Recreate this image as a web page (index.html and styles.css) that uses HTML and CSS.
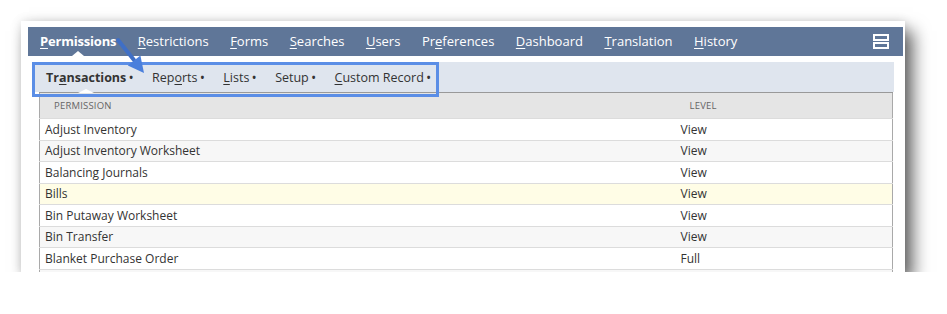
FILE: index.html
```html
<!DOCTYPE html>
<html lang="en">

<head>
    <meta charset="UTF-8">
    <title>Role Permissions</title>
    <link rel="stylesheet" href="styles.css">
</head>

<body>
    <div class="card">
        <nav class="mainTabs">
            <a class="tab active"><u>P</u>ermissions</a>
            <a class="tab"><u>R</u>estrictions</a>
            <a class="tab"><u>F</u>orms</a>
            <a class="tab"><u>S</u>earches</a>
            <a class="tab"><u>U</u>sers</a>
            <a class="tab">Pr<u>e</u>ferences</a>
            <a class="tab"><u>D</u>ashboard</a>
            <a class="tab"><u>T</u>ranslation</a>
            <a class="tab"><u>H</u>istory</a>
            <span class="layoutIcon"><i></i><i></i></span>
        </nav>

        <div class="subTabs">
            <a class="sub active">Tr<u>a</u>nsactions<b>•</b></a>
            <a class="sub">Rep<u>o</u>rts<b>•</b></a>
            <a class="sub"><u>L</u>ists<b>•</b></a>
            <a class="sub">Setup<b>•</b></a>
            <a class="sub"><u>C</u>ustom Record<b>•</b></a>
        </div>

        <table class="permTable">
            <thead>
                <tr>
                    <th class="colName">Permission</th>
                    <th>Level</th>
                </tr>
            </thead>
            <tbody>
                <tr><td>Adjust Inventory</td><td>View</td></tr>
                <tr class="odd"><td>Adjust Inventory Worksheet</td><td>View</td></tr>
                <tr><td>Balancing Journals</td><td>View</td></tr>
                <tr class="hover"><td>Bills</td><td>View</td></tr>
                <tr><td>Bin Putaway Worksheet</td><td>View</td></tr>
                <tr class="odd"><td>Bin Transfer</td><td>View</td></tr>
                <tr><td>Blanket Purchase Order</td><td>Full</td></tr>
                <tr class="odd"><td></td><td></td></tr>
            </tbody>
        </table>

        <!-- annotation: highlight box + arrow -->
        <div class="callout"></div>
        <svg class="arrow" width="60" height="60" viewBox="0 0 60 60">
            <line x1="6" y1="6" x2="22" y2="26" stroke="#3f6fc6" stroke-width="4" stroke-linecap="round" />
            <polygon points="32,39 15.8,31.4 28.4,21.4" fill="#4a7fdc" />
        </svg>
    </div>
</body>

</html>
```

FILE: styles.css
```css
body,
div,
nav,
table,
th,
td {
    padding: 0;
    margin: 0;
    box-sizing: border-box;
}

body {
    background: #fff;
    font-family: "Open Sans", "Liberation Sans", sans-serif;
}

a {
    color: inherit;
    text-decoration: none;
}

u {
    text-underline-offset: 2px;
}

.card {
    position: relative;
    width: 884px;
    height: 251px;
    margin: 21px 0 0 21px;
    padding: 6px 2px 0 7px;
    background: #fff;
    overflow: hidden;
    box-shadow: 8px 10px 16px rgba(0, 0, 0, 0.6), 0 0 10px rgba(0, 0, 0, 0.12);
}

.mainTabs {
    display: flex;
    align-items: center;
    gap: 21.5px;
    height: 29px;
    padding: 0 14px 0 12px;
    background: #5f7698;
}

.mainTabs .tab {
    position: relative;
    color: #fff;
    font-size: 13px;
    line-height: 29px;
}

.mainTabs .active {
    font-weight: bold;
    letter-spacing: -0.2px;
}

.mainTabs .active:after {
    content: '';
    position: absolute;
    left: 50%;
    bottom: 0;
    margin-left: -6px;
    border: 6px solid transparent;
    border-top: none;
    border-bottom: 5px solid #fff;
}

.layoutIcon {
    margin-left: auto;
    display: flex;
    flex-direction: column;
    gap: 1px;
}

.layoutIcon i {
    display: block;
    width: 16px;
    height: 7px;
    border: 2px solid #fff;
    box-sizing: border-box;
}

.subTabs {
    display: flex;
    align-items: center;
    gap: 19px;
    width: 861px;
    height: 30px;
    margin: 6px 0 0 5px;
    padding-left: 13px;
    background: #dfe5ee;
}

.subTabs .sub {
    position: relative;
    color: #333;
    font-size: 12.5px;
    line-height: 30px;
}

.subTabs .sub b {
    font-weight: bold;
    font-size: 10px;
    margin-left: 3px;
    vertical-align: 1px;
}

.subTabs .active {
    font-weight: bold;
}

.subTabs .active:after {
    content: '';
    position: absolute;
    left: 50%;
    bottom: 0;
    margin-left: -12px;
    border: 8px solid transparent;
    border-top: none;
    border-bottom: 4px solid #fff;
}

.permTable {
    width: 854px;
    margin-left: 11px;
    border-collapse: collapse;
    table-layout: fixed;
    border-left: 1px solid #a9a9a9;
    border-right: 1px solid #a9a9a9;
    font-size: 12px;
    color: #333;
}

.permTable th {
    height: 26px;
    padding-left: 14px;
    background: #e5e5e5;
    border-top: 1px solid #999;
    text-align: left;
    font-weight: normal;
    font-size: 9.5px;
    color: #666;
    text-transform: uppercase;
    letter-spacing: 0.2px;
}

.permTable .colName {
    width: 636px;
}

.permTable td {
    height: 21.5px;
    padding-left: 5px;
    border-top: 1px solid #dcdcdc;
}

.permTable tr.odd td {
    background: #f7f7f7;
}

.permTable tr.hover td {
    background: #fffde6;
}

.callout {
    position: absolute;
    left: 11px;
    top: 41px;
    width: 407px;
    height: 35px;
    border: 3px solid #5b8ee6;
    box-sizing: border-box;
}

.arrow {
    position: absolute;
    left: 91px;
    top: 13px;
}
```
